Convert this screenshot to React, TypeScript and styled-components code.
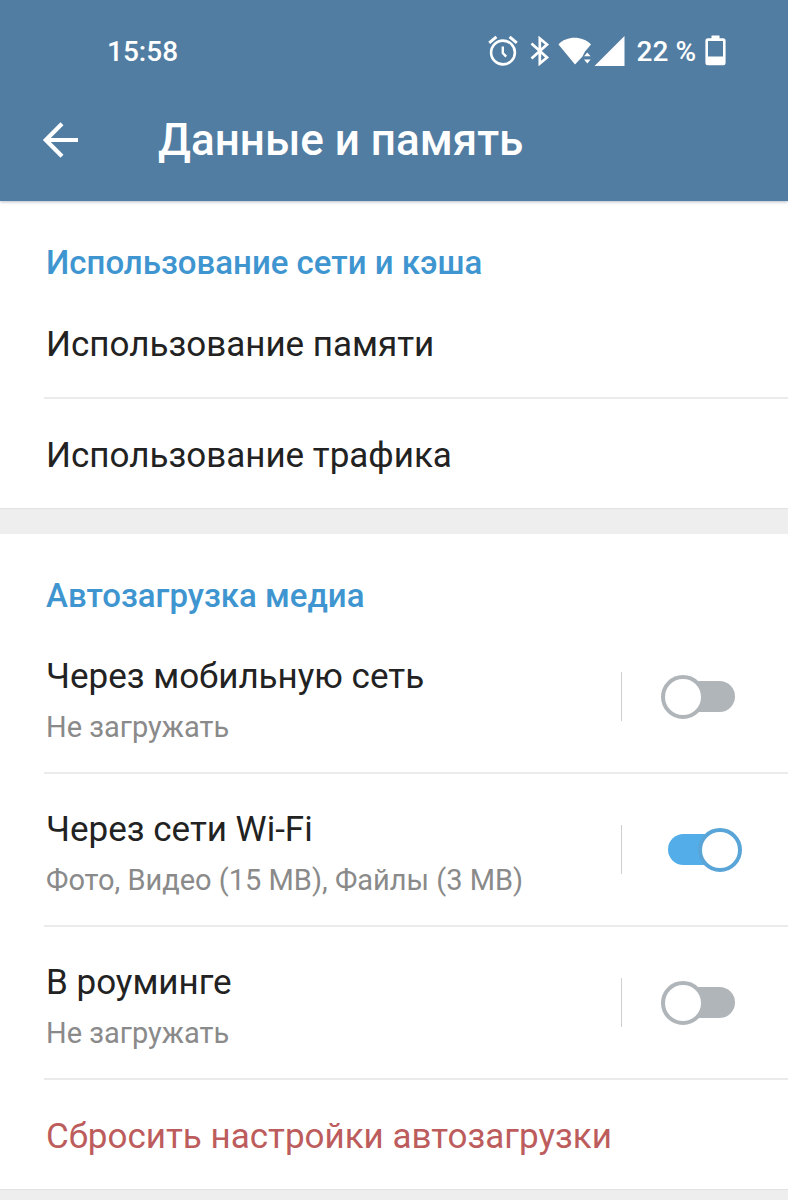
import React from "react";
import styled, { createGlobalStyle } from "styled-components";

const GlobalStyle = createGlobalStyle`
  *, *::before, *::after { box-sizing: border-box; }
  body {
    margin: 0;
    background: #eeeeee;
    color: #222222;
    font-family: Roboto, "Noto Sans", sans-serif;
  }
  h1, h2, p { margin: 0; font-weight: 500; }
  button { border: 0; background: none; font: inherit; cursor: pointer; }
`;

const Header = styled.header`
  position: relative;
  background: #517da2;
  color: #ffffff;
  box-shadow: 0 1px 3px rgba(60, 90, 130, 0.4);
`;

const StatusBar = styled.div`
  display: flex;
  align-items: center;
  justify-content: space-between;
  height: 80px;
  padding: 22px 62px 0 107px;
  font-size: 28px;
  font-weight: 500;
  line-height: 34px;
`;

const StatusIcons = styled.div`
  display: flex;
  align-items: center;

  svg { display: block; fill: currentColor; }
`;

const BluetoothSlot = styled.span`
  margin: 0 8px 0 12px;
`;

const StatusText = styled.span`
  padding-top: 2px;
`;

const BatteryLevel = styled(StatusText)`
  margin: 0 9px 0 12px;
`;

const Toolbar = styled.div`
  display: flex;
  align-items: center;
  height: 121px;
  padding: 0 40px 2px;
`;

const BackButton = styled.button`
  display: flex;
  width: 118px;
  padding: 0;
  color: inherit;
`;

const Title = styled.h1`
  font-size: 44px;
  line-height: 52px;
`;

const Section = styled.section`
  margin-bottom: 26px;
  background: #ffffff;
  box-shadow: 0 1px 1px #e2e2e2;
`;

const SectionTitle = styled.h2`
  height: 87px;
  padding: 42px 46px 0;
  color: #3e95cf;
  font-size: 33px;
  line-height: 40px;
`;

const Row = styled.div`
  margin-left: 44px;
  border-bottom: 2px solid #ebebeb;

  &:last-child { border-bottom: 0; }
`;

const ActionButton = styled.button<{ $danger?: boolean }>`
  display: block;
  width: 100%;
  padding: 37px 2px 32px;
  color: ${({ $danger }) => ($danger ? "#bd5c5c" : "#222222")};
  font-size: 35px;
  line-height: 40px;
  text-align: left;
`;

const ToggleLabel = styled.label`
  display: flex;
  align-items: center;
  height: 151px;
  padding: 0 53px 0 2px;
`;

const ToggleText = styled.span`
  flex: 1;
  min-width: 0;
  padding-top: 7px;
`;

const Name = styled.span`
  display: block;
  margin-bottom: 13px;
  font-size: 35px;
  line-height: 40px;
`;

const Detail = styled.span`
  display: block;
  color: #8a8a8a;
  font-size: 29px;
  line-height: 34px;
`;

const Divider = styled.span`
  width: 1px;
  height: 49px;
  margin-right: 46px;
  background: #cfcfcf;
`;

const Switch = styled.input`
  appearance: none;
  position: relative;
  width: 67px;
  height: 31px;
  margin: 0;
  border-radius: 16px;
  background: #b0b5b9;
  cursor: pointer;

  &::before {
    content: "";
    position: absolute;
    top: -6px;
    left: -7px;
    width: 44px;
    height: 44px;
    border: 4px solid #b0b5b9;
    border-radius: 50%;
    background: #ffffff;
  }

  &:checked { background: #52ade9; }
  &:checked::before {
    left: 30px;
    border-color: #5aa5d8;
  }
`;

const AlarmIcon = () => (
  <svg width="30" height="32" viewBox="0 0 30 32" aria-hidden="true">
    <g fill="none" stroke="currentColor">
      <circle cx="15" cy="17.5" r="11.9" strokeWidth="2.6" />
      <path d="M14.8 11.5v6.5l3.4 3.6" strokeWidth="2.4" />
      <path d="M1.2 7.8 8.4 1.8M28.8 7.8 21.6 1.8" strokeWidth="3" />
    </g>
  </svg>
);

const BluetoothIcon = () => (
  <svg width="20" height="30" viewBox="0 0 20 30" aria-hidden="true">
    <path
      d="M1.5 7.5 17 21.5 9.8 27.5V2.5L17 8.5 1.5 22.5"
      style={{ fill: "none" }}
      stroke="currentColor"
      strokeWidth="2.7"
    />
  </svg>
);

const WifiIcon = () => (
  <svg width="36" height="30" viewBox="0 0 36 30" aria-hidden="true">
    <path d="M0.5 8.4C8.5-0.4 24.5-0.4 33 8.4L27 15.6 24.5 20.6 17 28.6Z" />
    <path d="M26 20.2 29.3 16.4 32.6 20.2ZM26 23.6h6.6l-3.3 3.8Z" />
  </svg>
);

const SignalIcon = () => (
  <svg width="31" height="30" viewBox="0 0 31 30" aria-hidden="true">
    <path d="M0.5 30 30.5 0V30Z" />
  </svg>
);

const BatteryIcon = () => (
  <svg width="21" height="33" viewBox="0 0 21 33" aria-hidden="true">
    <path
      fillRule="evenodd"
      d="M6.5 0.5h8v2.8h3.6a2.5 2.5 0 0 1 2.5 2.5v21.9a2.5 2.5 0 0 1-2.5 2.5H2.9a2.5 2.5 0 0 1-2.5-2.5V5.8a2.5 2.5 0 0 1 2.5-2.5h3.6ZM3 6v15.6h15V6Z"
    />
  </svg>
);

const BackIcon = () => (
  <svg width="40" height="40" viewBox="0 0 40 40" aria-hidden="true">
    <path
      d="M38 20H6M22 3.8 5.8 20 22 36.2"
      fill="none"
      stroke="currentColor"
      strokeWidth="4.2"
    />
  </svg>
);

const downloads = [
  { id: "mobile", name: "Через мобильную сеть", detail: "Не загружать", on: false },
  { id: "wifi", name: "Через сети Wi-Fi", detail: "Фото, Видео (15 MB), Файлы (3 MB)", on: true },
  { id: "roaming", name: "В роуминге", detail: "Не загружать", on: false },
];

export default function App() {
  return (
    <>
      <GlobalStyle />
      <Header>
        <StatusBar>
          <StatusText>15:58</StatusText>
          <StatusIcons>
            <AlarmIcon />
            <BluetoothSlot>
              <BluetoothIcon />
            </BluetoothSlot>
            <WifiIcon />
            <SignalIcon />
            <BatteryLevel>22 %</BatteryLevel>
            <BatteryIcon />
          </StatusIcons>
        </StatusBar>
        <Toolbar>
          <BackButton type="button" aria-label="Назад">
            <BackIcon />
          </BackButton>
          <Title>Данные и память</Title>
        </Toolbar>
      </Header>
      <main>
        <Section>
          <SectionTitle>Использование сети и кэша</SectionTitle>
          <Row>
            <ActionButton type="button">Использование памяти</ActionButton>
          </Row>
          <Row>
            <ActionButton type="button">Использование трафика</ActionButton>
          </Row>
        </Section>
        <Section>
          <SectionTitle>Автозагрузка медиа</SectionTitle>
          {downloads.map(({ id, name, detail, on }) => (
            <Row key={id}>
              <ToggleLabel htmlFor={id}>
                <ToggleText>
                  <Name>{name}</Name>
                  <Detail>{detail}</Detail>
                </ToggleText>
                <Divider />
                <Switch id={id} type="checkbox" role="switch" defaultChecked={on} />
              </ToggleLabel>
            </Row>
          ))}
          <Row>
            <ActionButton type="button" $danger>
              Сбросить настройки автозагрузки
            </ActionButton>
          </Row>
        </Section>
      </main>
    </>
  );
}
